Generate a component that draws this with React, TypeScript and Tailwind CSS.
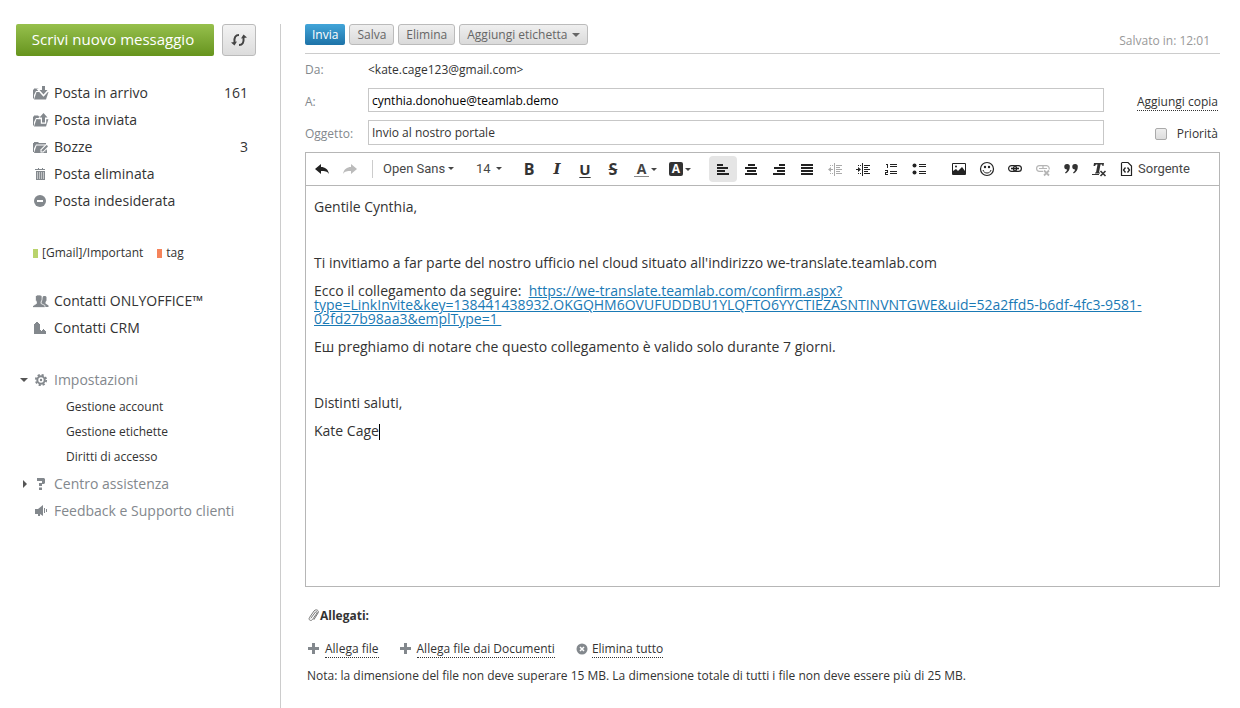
import type { ReactNode } from "react";

type IconProps = { className?: string };

// ── Sidebar icons ──

function InboxIcon() {
  return (
    <svg width="16" height="14" viewBox="0 0 16 14" fill="#83888d">
      <path d="M0 3.500h1v-1h4l1 1h2v1.500H3L1 9v3.500H0z" />
      <path d="M3.500 6H15.500l-2.500 7.500H1z" />
      <path d="M9 0h3v4h3l-4.500 5L6 4h3z" stroke="#fff" strokeWidth="2.400" />
      <path d="M9 0h3v4h2.500l-4 4.500-4-4.500H9z" />
    </svg>
  );
}

function SentIcon() {
  return (
    <svg width="16" height="14" viewBox="0 0 16 14" fill="#83888d">
      <path d="M0 3.500h1v-1h4l1 1h1v1.500H3L1 9v3.500H0z" />
      <path d="M3.500 6H15.500l-2.500 7.500H1z" />
      <path d="M9 9.500V5H7l3.500-4L14 5h-2v4.500z" stroke="#fff" strokeWidth="2.400" />
      <path d="M9 9.500V4.500H6.500l4-4.500 4 4.500H12v5z" />
    </svg>
  );
}

function DraftsIcon() {
  return (
    <svg width="16" height="14" viewBox="0 0 16 14" fill="#83888d">
      <path d="M0 3h1V2h4l1 1h7v1.500H3L1 8.500V12H0z" />
      <path d="M3.500 5.500H14.500l-2.500 7.500H1z" />
      <path d="M7.500 12.500V9.500l5-5 3 2.500-5 5.500z" fill="#fff" />
      <path d="M8.500 11.500v-1.500l5-5 1.500 1.500-5 5z" />
      <path d="M14 9v4h-2.500z" />
    </svg>
  );
}

function TrashIcon() {
  return (
    <svg width="16" height="14" viewBox="0 0 16 14" fill="#83888d" shapeRendering="crispEdges">
      <path d="M2 2h3V1h1v1h3V1h1v1h2v1H2zM3 4h9v9H3z" />
      <path d="M4 5h1v7H4zM6 5h1v7H6zM8 5h1v7H8zM10 5h1v7h-1z" fill="#c2c4c6" />
    </svg>
  );
}

function SpamIcon() {
  return (
    <svg width="16" height="14" viewBox="0 0 16 14">
      <circle cx="7" cy="7" r="6" fill="#83888d" />
      <path d="M4 6h6v2H4z" fill="#fff" />
    </svg>
  );
}

function PeopleIcon() {
  return (
    <svg width="16" height="14" viewBox="0 0 16 14" fill="#83888d">
      <path d="M9.500 3l1-1h2l1 1v3.500l-1 1.500v1.500l3 2V13h-3.500L8 9.500z" />
      <path
        d="M2.500 2.500l1.500-1.500h3.500L9 2.500V6L8 8v1.500l4 2V13.500H-.5V12L3.500 9.500V8L2.500 6z"
        stroke="#fff"
        strokeWidth=".7"
      />
    </svg>
  );
}

function CrmIcon() {
  return (
    <svg width="16" height="14" viewBox="0 0 16 14" fill="#83888d" shapeRendering="crispEdges">
      <path d="M1 13V3h1V2h1V1h2v1h1v1h1v6h1v1h1V9h1V8h1v1h1v1h1v3z" />
    </svg>
  );
}

function GearIcon() {
  return (
    <svg width="16" height="14" viewBox="0 0 16 14" fill="none" stroke="#83888d">
      <circle cx="7" cy="7" r="5.200" strokeWidth="1.800" strokeDasharray="2.200 1.884" />
      <circle cx="7" cy="7" r="3.700" strokeWidth="2" />
      <circle cx="7" cy="7" r="1.200" fill="#83888d" stroke="none" />
    </svg>
  );
}

function HelpIcon() {
  return (
    <svg width="16" height="14" viewBox="0 0 16 14" fill="#83888d">
      <path d="M3 1h7l1 1v4l-1 1H8v2H5V6h3V4H3zM5 10.500h3v2.500H5z" />
    </svg>
  );
}

function FeedbackIcon() {
  return (
    <svg width="16" height="14" viewBox="0 0 16 14" fill="#83888d">
      <path d="M1 5h3l5-4v11L6 10v2H4v-2H1zM10 4h1v5h-1zM12 5h1v3h-1z" />
    </svg>
  );
}

function RefreshIcon() {
  return (
    <svg width="16" height="14" viewBox="0 0 16 14" fill="none" stroke="#444" strokeWidth="2">
      <path d="M8 2C4.500 2 3 4.500 3.500 9M8 12c3.500 0 5-2.500 4.500-7" />
      <path d="M0 9.500l6-1-2.500 4zM16 4.500l-6 1 2.500-4z" fill="#444" stroke="none" />
    </svg>
  );
}

function Caret({ className }: IconProps) {
  return (
    <svg className={className} width="8" height="4" viewBox="0 0 8 4" fill="currentColor">
      <path d="M0 0h8L4 4z" />
    </svg>
  );
}

function SmallCaret({ className }: IconProps) {
  return (
    <svg className={className} width="6" height="3" viewBox="0 0 6 3" fill="#444">
      <path d="M0 0h6L3 3z" />
    </svg>
  );
}

// ── Editor icons ──

function ToolIcon({ children }: { children: ReactNode }) {
  return (
    <svg width="16" height="16" viewBox="0 0 16 16" fill="#222">
      {children}
    </svg>
  );
}

const undoPath = "M1 8l6-5v3c4 0 7 2 8 7-2-3-4-3-8-3v3z";

const tools: { label: string; icon: ReactNode; active?: boolean }[] = [
  {
    label: "Allinea a sinistra",
    active: true,
    icon: <path d="M2 3h6v2H2zM2 6h11v2H2zM2 9h8v2H2zM2 12h12v2H2z" />,
  },
  {
    label: "Centra",
    icon: <path d="M5 3h7v2H5zM2 6h12v2H2zM4 9h9v2H4zM2 12h12v2H2z" />,
  },
  {
    label: "Allinea a destra",
    icon: <path d="M8 3h6v2H8zM3 6h11v2H3zM6 9h8v2H6zM2 12h12v2H2z" />,
  },
  {
    label: "Giustifica",
    icon: <path d="M2 3h12v2H2zM2 6h12v2H2zM2 9h12v2H2zM2 12h12v2H2z" />,
  },
  {
    label: "Riduci rientro",
    icon: (
      <path
        fill="#aaa"
        d="M7 2h1v13H7zM9 4h6v1H9zM9 6h4v1H9zM9 8h6v1H9zM9 10h4v1H9zM9 12h6v1H9zM1 8.500L4 6v2h2v1H4v2zM3 4h1v1H3zM5 4h1v1H5zM3 12h1v1H3zM5 12h1v1H5z"
      />
    ),
  },
  {
    label: "Aumenta rientro",
    icon: (
      <path d="M7 2h1v13H7zM9 4h6v1H9zM9 6h4v1H9zM9 8h6v1H9zM9 10h4v1H9zM9 12h6v1H9zM6 8.500L3 6v2H1v1h2v2zM3 4h1v1H3zM5 4h1v1H5zM3 12h1v1H3zM5 12h1v1H5z" />
    ),
  },
  {
    label: "Elenco numerato",
    icon: (
      <path d="M3 3h2v4H4V4H3zM7 3h7v1H7zM7 5h7v1H7zM2 9h3v3H3v1h2v1H2v-3h2v-1H2zM7 10h7v1H7zM7 12h7v1H7z" />
    ),
  },
  {
    label: "Elenco puntato",
    icon: (
      <>
        <circle cx="3.500" cy="4.500" r="2" />
        <circle cx="3.500" cy="11.500" r="2" />
        <path d="M8 3h7v1H8zM8 5h7v1H8zM8 10h7v1H8zM8 12h7v1H8z" />
      </>
    ),
  },
];

const insertTools: { label: string; icon: ReactNode }[] = [
  {
    label: "Immagine",
    icon: (
      <>
        <path d="M1.500 2.500h13v11h-13z" fill="none" stroke="#222" />
        <path d="M2 13v-3l3-2 2 2 4-4 3 4v3z" />
        <circle cx="5" cy="5.500" r="1" />
      </>
    ),
  },
  {
    label: "Emoticon",
    icon: (
      <>
        <circle cx="8" cy="8" r="6.500" fill="none" stroke="#222" strokeWidth="1.200" />
        <circle cx="6" cy="6" r="1.200" />
        <circle cx="10" cy="6" r="1.200" />
        <path d="M4 9c1 4 7 4 8 0" fill="none" stroke="#222" />
      </>
    ),
  },
  {
    label: "Collegamento",
    icon: (
      <g fill="none" stroke="#222" strokeWidth="1.200">
        <rect x="1.600" y="4.600" width="8" height="5.800" rx="2.900" />
        <rect x="6.400" y="4.600" width="8" height="5.800" rx="2.900" />
        <path d="M4 7.500h8" strokeWidth="1.600" />
      </g>
    ),
  },
  {
    label: "Rimuovi collegamento",
    icon: (
      <g fill="none" stroke="#b5b5b5" strokeWidth="1.200">
        <path d="M8 10.400H4.500a2.900 2.900 0 010-5.800h7a2.900 2.900 0 012.500 4M4 7.500h8M8 4.500v3" />
        <path d="M9 9.500l5 5M14 9.500l-5 5" strokeWidth="1.800" />
      </g>
    ),
  },
  {
    label: "Citazione",
    icon: (
      <path
        fill="#333"
        d="M4 3a2.500 2.500 0 012.800 3c0 3-1.500 5-4 6.500l-.8-1c1.500-1 2-2 2-3A2.700 2.700 0 014 3zM12 3a2.500 2.500 0 012.800 3c0 3-1.500 5-4 6.500l-.8-1c1.500-1 2-2 2-3A2.700 2.700 0 0112 3z"
      />
    ),
  },
  {
    label: "Rimuovi formattazione",
    icon: (
      <g fill="#333">
        <path d="M3 2h10l-.5 3h-1L11 3.500H9.500l-1.500 8H9v1H4v-1h1l1.500-8H5L4 5H2.500zM1 13h7v1H1z" />
        <path d="M9.500 10l5 5M14.500 10l-5 5" fill="none" stroke="#333" strokeWidth="1.600" />
      </g>
    ),
  },
];

function ToolButton({
  label,
  active,
  children,
}: {
  label: string;
  active?: boolean;
  children: ReactNode;
}) {
  return (
    <button
      type="button"
      aria-label={label}
      className={`flex h-[26px] w-7 shrink-0 items-center justify-center rounded-sm text-base font-bold leading-none text-[#333] ${
        active ? "bg-[#e5e5e5]" : ""
      }`}
    >
      {children}
    </button>
  );
}

// ── Sidebar ──

const folders = [
  { name: "Posta in arrivo", icon: <InboxIcon />, count: "161" },
  { name: "Posta inviata", icon: <SentIcon /> },
  { name: "Bozze", icon: <DraftsIcon />, count: "3" },
  { name: "Posta eliminata", icon: <TrashIcon /> },
  { name: "Posta indesiderata", icon: <SpamIcon /> },
];

const settings = ["Gestione account", "Gestione etichette", "Diritti di accesso"];

function NavRow({ icon, name, count }: { icon: ReactNode; name: string; count?: string }) {
  return (
    <li>
      <a href="#" className="flex h-[27px] items-center pl-[17px] pr-2">
        {icon}
        <span className="ml-[5px] grow">{name}</span>
        {count && <span>{count}</span>}
      </a>
    </li>
  );
}

function Sidebar() {
  return (
    <aside className="w-[281px] shrink-0 border-r border-[#ccc] pl-4 pr-6 text-sm">
      <div className="flex gap-2">
        <button
          type="button"
          className="h-8 grow rounded-xs bg-linear-to-b from-[#97c04c] to-[#66941c] pr-1 text-[15px] text-white"
        >
          Scrivi nuovo messaggio
        </button>
        <button
          type="button"
          aria-label="Aggiorna"
          className="flex h-8 w-[34px] items-center justify-center rounded-[3px] border border-[#bbb] bg-linear-to-b from-[#f3f3f3] to-[#dcdcdc]"
        >
          <RefreshIcon />
        </button>
      </div>

      <ul className="mt-[23px]">
        {folders.map((f) => (
          <NavRow key={f.name} {...f} />
        ))}
      </ul>

      <div className="mt-[29px] flex h-5 items-center gap-[14px] pl-[17px] text-xs">
        <a href="#" className="flex items-center gap-1">
          <span className="h-[9px] w-[5px] bg-[#b9d36c]" />
          [Gmail]/Important
        </a>
        <a href="#" className="flex items-center gap-1">
          <span className="h-[9px] w-[5px] bg-[#f5845b]" />
          tag
        </a>
      </div>

      <ul className="mt-6">
        <NavRow icon={<PeopleIcon />} name="Contatti ONLYOFFICE™" />
        <NavRow icon={<CrmIcon />} name="Contatti CRM" />
      </ul>

      <div className="mt-[25px] text-[#83888d]">
        <a href="#" className="flex h-[27px] items-center pl-1">
          <Caret className="mr-1.5 text-[#555]" />
          <GearIcon />
          <span className="ml-1">Impostazioni</span>
        </a>
        <ul className="py-px pl-[50px] text-xs text-[#333]">
          {settings.map((s) => (
            <li key={s}>
              <a href="#" className="flex h-[25px] items-center">
                {s}
              </a>
            </li>
          ))}
        </ul>
        <a href="#" className="flex h-[27px] items-center pl-[7px]">
          <svg className="mr-[7px]" width="4" height="8" viewBox="0 0 4 8" fill="#555">
            <path d="M0 0l4 4-4 4z" />
          </svg>
          <HelpIcon />
          <span className="ml-1">Centro assistenza</span>
        </a>
        <a href="#" className="flex h-[27px] items-center pl-[18px]">
          <FeedbackIcon />
          <span className="ml-1">Feedback e Supporto clienti</span>
        </a>
      </div>
    </aside>
  );
}

// ── Compose form ──

const grayButton =
  "flex h-[21px] items-center rounded-[3px] border border-[#bbb] bg-linear-to-b from-[#efefef] to-[#dadada] px-[7px] text-[#666]";

function Toolbar() {
  return (
    <div className="flex h-[33px] items-center overflow-hidden border-b border-[#b6b6b6] pl-0.5">
      <ToolButton label="Annulla">
        <ToolIcon>
          <path d={undoPath} />
        </ToolIcon>
      </ToolButton>
      <ToolButton label="Ripristina">
        <ToolIcon>
          <path d={undoPath} fill="#bbb" transform="matrix(-1 0 0 1 16 0)" />
        </ToolIcon>
      </ToolButton>
      <span className="mx-2 h-[18px] w-px bg-[#ccc]" />
      <div className="relative flex items-center font-['Roboto',sans-serif] text-[13px] text-[#474747]">
        <select
          aria-label="Carattere"
          className="w-[85px] appearance-none bg-transparent pl-0.5"
          defaultValue="Open Sans"
        >
          <option>Open Sans</option>
        </select>
        <SmallCaret className="pointer-events-none absolute right-3" />
      </div>
      <div className="relative flex items-center font-['Roboto',sans-serif] text-[13px] text-[#474747]">
        <select
          aria-label="Dimensione"
          className="w-[49px] appearance-none bg-transparent pl-[10px]"
          defaultValue="14"
        >
          <option>14</option>
        </select>
        <SmallCaret className="pointer-events-none absolute right-[13px]" />
      </div>
      <ToolButton label="Grassetto">B</ToolButton>
      <ToolButton label="Corsivo">
        <span className="font-['DejaVu_Serif',serif] text-[15px] italic">I</span>
      </ToolButton>
      <ToolButton label="Sottolineato">
        <span className="text-[15px] underline decoration-1 underline-offset-2">U</span>
      </ToolButton>
      <ToolButton label="Barrato">
        <span className="line-through decoration-1">S</span>
      </ToolButton>
      <button type="button" aria-label="Colore testo" className="ml-[7px] flex h-[26px] w-[35px] items-center gap-0.5">
        <span className="w-[15px] border-b border-[#888] text-center text-sm font-bold leading-[14px] text-[#444]">
          A
        </span>
        <SmallCaret />
      </button>
      <button type="button" aria-label="Colore sfondo" className="flex h-[26px] w-10 items-center gap-0.5">
        <span className="flex size-[14px] items-center justify-center rounded-xs bg-[#333] text-xs font-bold leading-none text-white">
          A
        </span>
        <SmallCaret />
      </button>
      {tools.map((t) => (
        <ToolButton key={t.label} label={t.label} active={t.active}>
          <ToolIcon>{t.icon}</ToolIcon>
        </ToolButton>
      ))}
      <span className="w-3 shrink-0" />
      {insertTools.map((t) => (
        <ToolButton key={t.label} label={t.label}>
          <ToolIcon>{t.icon}</ToolIcon>
        </ToolButton>
      ))}
      <button
        type="button"
        className="ml-[5px] flex items-center gap-1 font-['Roboto',sans-serif] text-[13px] text-[#474747]"
      >
        <ToolIcon>
          <path d="M3.500 2v12.500h10V5l-3.500-3.500H3.500" fill="none" stroke="#222" strokeWidth="1.200" />
          <path d="M7.500 6.500L5.500 9l2 2.500M9.500 6.500l2 2.500-2 2.500" fill="none" stroke="#222" strokeWidth="1.300" />
        </ToolIcon>
        Sorgente
      </button>
    </div>
  );
}

function MessageBody() {
  return (
    <div
      contentEditable
      suppressContentEditableWarning
      role="textbox"
      aria-label="Messaggio"
      className="min-h-[400px] space-y-[14px] px-2 py-[14px] text-sm leading-[14px] text-[#333] outline-none"
    >
      <p>Gentile Cynthia,</p>
      <p>
        <br />
      </p>
      <p>
        Ti invitiamo a far parte del nostro ufficio nel cloud situato all'indirizzo
        we-translate.teamlab.com
      </p>
      <p>
        Ecco il collegamento da seguire:&nbsp;{" "}
        <a href="#" className="break-words text-[#1a7ab5] underline">
          https://we-translate.teamlab.com/confirm.aspx?type=LinkInvite&amp;key=138441438932.OKGQHM6OVUFUDDBU1YLQFTO6YYCTIEZASNTINVNTGWE&amp;uid=52a2ffd5-b6df-4fc3-9581-02fd27b98aa3&amp;emplType=1&nbsp;
        </a>
      </p>
      <p>Eш preghiamo di notare che questo collegamento è valido solo durante 7 giorni.</p>
      <p>
        <br />
      </p>
      <p>Distinti saluti,</p>
      <p>
        Kate Cage
        <span className="-my-1 inline-block h-4 w-px bg-black align-middle" />
      </p>
    </div>
  );
}

function PlusIcon() {
  return (
    <svg width="12" height="12" viewBox="0 0 12 12" fill="#83888d">
      <path d="M5 0h3v4h4v3H8v4H5V7H1V4h4z" />
    </svg>
  );
}

function Attachments() {
  const link = "border-b border-dotted border-[#333] leading-[17px]";

  return (
    <section className="mt-5 pl-0.5">
      <h2 className="flex h-[18px] items-center font-bold">
        <svg width="13" height="14" viewBox="0 0 13 14" fill="none" stroke="#777" strokeLinecap="round">
          <path d="M4 9l4.500-6c1-1 2 0 1.500 1L5.500 10.500C4 12.500 1 11 2.500 8.500L7 2c2-2.500 5.500-.5 4 2L7 10.500" />
        </svg>
        Allegati:
      </h2>
      <div className="mt-[15px] flex items-center">
        <PlusIcon />
        <button type="button" className={`ml-1.5 ${link}`}>
          Allega file
        </button>
        <span className="w-5" />
        <PlusIcon />
        <button type="button" className={`ml-1.5 ${link}`}>
          Allega file dai Documenti
        </button>
        <span className="w-[21px]" />
        <svg width="12" height="12" viewBox="0 0 12 12">
          <circle cx="6" cy="6" r="5.500" fill="#83888d" />
          <path d="M4 4l4 4M8 4l-4 4" stroke="#fff" strokeWidth="1.500" />
        </svg>
        <button type="button" className={`ml-1 ${link}`}>
          Elimina tutto
        </button>
      </div>
      <p className="mt-[9px] leading-[18px]">
        Nota: la dimensione del file non deve superare 15 MB. La dimensione totale di tutti i file
        non deve essere più di 25 MB.
      </p>
    </section>
  );
}

export default function App() {
  return (
    <div className="flex min-h-screen bg-white pt-6 font-['Open_Sans',sans-serif] text-[#333]">
      <Sidebar />

      <main className="min-w-0 grow pl-6 pr-5 text-xs">
        <div className="flex h-[30px] items-start gap-1 border-b border-[#ccc]">
          <button
            type="button"
            className="flex h-[21px] items-center rounded-xs bg-linear-to-b from-[#42a5d9] to-[#1d73a8] px-[7px] text-white"
          >
            Invia
          </button>
          <button type="button" className={grayButton}>
            Salva
          </button>
          <button type="button" className={grayButton}>
            Elimina
          </button>
          <button type="button" className={grayButton}>
            Aggiungi etichetta
            <Caret className="ml-[5px]" />
          </button>
          <span className="ml-auto mr-[10px] self-end leading-[25px] text-[#999]">
            Salvato in: 12:01
          </span>
        </div>

        <div className="grid grid-cols-[63px_1fr_116px] items-center pt-1">
          <span className="text-[#83888d]">Da:</span>
          <span className="col-span-2 leading-6">&lt;kate.cage123@gmail.com&gt;</span>
          <label htmlFor="to" className="mt-[10px] text-[#83888d]">
            A:
          </label>
          <input
            id="to"
            type="text"
            defaultValue="cynthia.donohue@teamlab.demo"
            className="mt-1.5 h-6 border border-[#c7c7c7] px-[3px] text-black outline-none"
          />
          <div className="mt-[10px] pr-0.5 text-right">
            <button type="button" className="border-b border-dotted border-[#333] leading-[17px]">
              Aggiungi copia
            </button>
          </div>
          <label htmlFor="subject" className="mt-[10px] text-[#83888d]">
            Oggetto:
          </label>
          <input
            id="subject"
            type="text"
            defaultValue="Invio al nostro portale"
            className="mt-2 h-[25px] border border-[#c7c7c7] px-[3px] outline-none"
          />
          <label className="mt-[10px] flex items-center justify-end gap-[10px] pr-0.5">
            <input
              type="checkbox"
              className="size-3 appearance-none rounded-xs border border-[#aaa] bg-linear-to-b from-[#eee] to-[#ddd]"
            />
            Priorità
          </label>
        </div>

        <div className="mt-[7px] border border-[#b6b6b6]">
          <Toolbar />
          <MessageBody />
        </div>

        <Attachments />
      </main>
    </div>
  );
}
